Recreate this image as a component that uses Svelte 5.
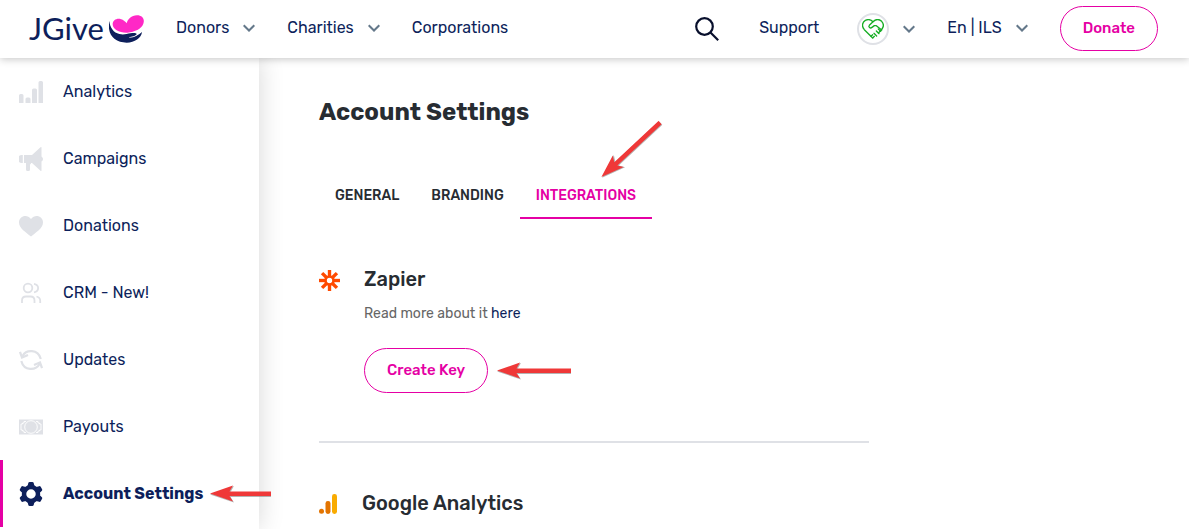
<script>
  const menu = [
    { label: 'Analytics', icon: 'bars' },
    { label: 'Campaigns', icon: 'megaphone' },
    { label: 'Donations', icon: 'heart' },
    { label: 'CRM - New!', icon: 'people' },
    { label: 'Updates', icon: 'refresh' },
    { label: 'Payouts', icon: 'cash' },
    { label: 'Account Settings', icon: 'gear', active: true }
  ];
  const tabs = ['General', 'Branding', 'Integrations'];
  let current = $state('Integrations');
  const spokes = [0, 45, 90, 135, 180, 225, 270, 315];
  const teeth = [0, 60, 120, 180, 240, 300];
</script>

{#snippet chevron()}
  <svg class="chevron" viewBox="0 0 12 8" aria-hidden="true"><path d="M.7 1.200 6 6.500 11.300 1.200" fill="none" stroke="#64788a" stroke-width="2" /></svg>
{/snippet}

{#snippet arrow(kind)}
  <svg class="arrow {kind}" viewBox="0 0 90 18" preserveAspectRatio="xMinYMid slice" aria-hidden="true">
    <path d="M0 9.500 24 1 20.500 7H90V12H20.500L24 17.500Z" fill="#777" opacity=".55" />
    <path d="M0 8.500 23 .500 19.500 6.500H90V11H19.500L23 16.500Z" fill="#ef3838" />
  </svg>
{/snippet}

<header>
  <a class="logo" href="#home" aria-label="JGive">
    <span>JGive</span>
    <svg viewBox="327 45 105 84" aria-hidden="true">
      <path d="M382 98C358 99 338 88 338 73C338 58 356 51 370 61C376 65 379 68 380 70C383 58 394 46 411 46C427 46 435 57 430 71C424 87 405 95 382 98Z" fill="#ff28c6" />
      <path d="M328 63C330 84 341 98 358 102C370 105 380 102 391 100C400 98 408 98 410 102C411 106 402 109 392 111C405 112 415 105 426 96C424 114 404 128 380 128C344 128 320 104 328 63Z" fill="#0d1f5b" />
      <path d="M388 112.500C399 112 408 108 415 100" fill="none" stroke="#fff" stroke-width="2" />
    </svg>
  </a>
  <nav class="main" aria-label="Main">
    <button>Donors {@render chevron()}</button>
    <button>Charities {@render chevron()}</button>
    <a href="#corporations">Corporations</a>
  </nav>
  <div class="tools">
    <button class="search" aria-label="Search">
      <svg viewBox="0 0 24 24" aria-hidden="true"><g fill="none" stroke="#080f2c" stroke-width="2.200"><circle cx="9.500" cy="9.500" r="8.300" /><path d="m15.500 15.500 7.700 7.700" /></g></svg>
    </button>
    <a class="link" href="#support">Support</a>
    <button class="profile" aria-label="Account menu">
      <span class="avatar">
        <svg viewBox="0 0 66 60" fill="none" stroke="#16ad24" stroke-width="4" stroke-linecap="round" stroke-linejoin="round" aria-hidden="true">
          <path d="M32 57 7 32C-2 22 1 9 10 4C19 0 27 2 33 8C42 0 52 0 59 7C67 16 64 26 58 33L50 41" />
          <path d="M33 8 22 19C18 24 25 30 30 25L37 20H43L59 33" />
          <path d="M33 56 37 52M36 43 44 51M43 36 51 44M49 30 56 37M27 52 32 47" />
        </svg>
      </span>
      {@render chevron()}
    </button>
    <button class="link">En | ILS {@render chevron()}</button>
    <a class="pill" href="#donate">Donate</a>
  </div>
</header>

<div class="body">
  <aside>
    <nav aria-label="Account">
      {#each menu as item}
        <a class="item" class:active={item.active} href="#{item.icon}">
          <svg class="glyph" viewBox="0 0 24 24" aria-hidden="true">
            {#if item.icon === 'bars'}
              <path d="M0 23V15.500q0-1.500 1.500-1.500h1.500q1.500 0 1.500 1.500V23ZM6.500 23V19q0-1.500 1.500-1.500h2q1.500 0 1.500 1.500V23ZM13 23V10q0-1.500 1.500-1.500h2Q18 8.500 18 10V23ZM19.500 23V2.500Q19.500 1 21 1h1.500Q24 1 24 2.500V23Z" />
            {:else if item.icon === 'megaphone'}
              <path d="M3.800 8H3a4 4 0 0 0 0 8h.8ZM5 8h8L21.500.300q1-.800 1 .500V9.500q1.500 1 1.500 2.500t-1.500 2.500v8.700q0 1.300-1 .500L13 16h-1v0.500q-1 .500-1 1.500v4.500q0 1.500-1.500 1.500H8.500Q7 24 7 22.500V16H5Z" />
            {:else if item.icon === 'heart'}
              <path d="M12 22.500C8 19 0 14.500 0 8.500C0 2 8-.500 12 5C16-.500 24 2 24 8.500C24 14.500 16 19 12 22.500Z" />
            {:else if item.icon === 'people'}
              <g fill="none" stroke="#dfe1e6" stroke-width="1.800"><circle cx="9" cy="7" r="4.300" /><path d="M3 22v-2.500q0-4 4-4h4.500q4 0 4 4V22M15 2.800c5.500 1 5.500 7.500 0 8.500M17.500 15.500q3.700 1 3.700 4V22" /></g>
            {:else if item.icon === 'refresh'}
              <g fill="none" stroke="#dfe1e6" stroke-width="2.200"><path d="M3.500 8C7 1.500 19 .500 21.800 11M20.500 16C17 22.500 5 23.500 2.300 13" /><path d="m1 4 2 5.500 6-2.500M23 20l-2-5.500-6 2.500" /></g>
            {:else if item.icon === 'cash'}
              <path d="M0 4.500H24V19.500H0Z" /><g fill="none" stroke="#fff" stroke-width=".9"><circle cx="12" cy="12" r="6.300" /><path d="M5 6.500V8H3.500V9H2v6h1.500v1H5v1.500h2M19 6.500V8h1.500V9H22v6h-1.500v1H19v1.500h-2M5 6.500h2M19 6.500h-2" /></g>
            {:else}
              <circle cx="12" cy="12" r="7" fill="none" stroke="#0d1f5b" stroke-width="4.500" />
              {#each teeth as angle}
                <path d="M8.300 5 9.300 1Q9.600 0 10.600 0h2.800q1 0 1.300 1l1 4Z" fill="#0d1f5b" transform="rotate({angle} 12 12)" />
              {/each}
            {/if}
          </svg>
          <span>{item.label}</span>
          {#if item.active}{@render arrow('menu-arrow')}{/if}
        </a>
      {/each}
    </nav>
  </aside>

  <main>
    <h1>Account Settings</h1>
    <div class="tabs" role="tablist">
      {#each tabs as tab}
        <button role="tab" aria-selected={current === tab} class:selected={current === tab} onclick={() => (current = tab)}>{tab}</button>
      {/each}
      {@render arrow('tab-arrow')}
    </div>

    <section>
      <div class="mark">
        <svg class="zapier" viewBox="0 0 20 20" aria-hidden="true">
          {#each spokes as angle}
            <path d="M10 0V7" stroke="#ff4a00" stroke-width="3.200" transform="rotate({angle} 10 10)" />
          {/each}
          <circle cx="10" cy="10" r="3.800" fill="none" stroke="#ff4a00" stroke-width="2.400" />
        </svg>
      </div>
      <div>
        <h2>Zapier</h2>
        <p>Read more about it <a href="#zapier">here</a></p>
        <div class="action">
          <button class="pill">Create Key</button>
          {@render arrow('key-arrow')}
        </div>
      </div>
    </section>
    <section>
      <div class="mark">
        <svg class="ga" viewBox="0 0 18 20" preserveAspectRatio="xMinYMid" aria-hidden="true"><circle cx="2.500" cy="17.300" r="2.500" fill="#e37400" /><rect x="6.500" y="7" width="5" height="13" rx="2.400" fill="#e37400" /><rect x="13" width="5" height="20" rx="2.400" fill="#f9ab00" /></svg>
      </div>
      <h2>Google Analytics</h2>
    </section>
  </main>
</div>

<style>
  :global(body) { font-family: Rubik, Roboto, sans-serif; font-size: 16px; line-height: 20px; color: #0d1f5b; background: #fff; }
  :global(*) { box-sizing: border-box; }
  a { color: inherit; text-decoration: none; }
  button { font: inherit; color: inherit; background: none; border: 0; padding: 0; cursor: pointer; }
  svg { display: block; flex: none; }
  header { position: relative; z-index: 2; display: flex; align-items: center; height: 58px; padding: 0 31px 1px 29px; background: #fff; box-shadow: 0 1px 8px rgba(0, 0, 0, .24); }
  .logo { display: flex; align-items: center; gap: 4px; width: 115px; font: 31px/36px Lato, sans-serif; }
  .logo span { flex: 1; padding-bottom: 2px; }
  .logo svg { width: 35px; height: 28px; }
  .main, .tools { display: flex; align-items: center; gap: 32px; white-space: nowrap; }
  .main { margin-left: 32px; padding-bottom: 2px; }
  .main button, .tools button { display: flex; align-items: center; gap: 14px; }
  .tools { margin-left: auto; }
  .tools .link { padding-bottom: 2px; }
  .tools .search { margin-right: 8px; }
  .tools .search + a { margin-right: 6px; }
  .search svg { width: 24px; height: 24px; }
  .chevron { width: 12px; height: 8px; }
  .avatar { display: grid; place-items: center; width: 32px; height: 32px; border: 2px solid #dfe1e6; border-radius: 50%; }
  .avatar svg { width: 22px; height: 20px; }
  .pill { display: flex; align-items: center; justify-content: center; height: 45px; padding: 0 22px 2px; border: 1px solid #e500a4; border-radius: 23px; color: #e500a4; font-size: 15px; font-weight: 500; }
  .body { display: flex; min-height: calc(100vh - 58px); }
  aside { flex: none; width: 259px; box-shadow: 0 0 24px rgba(0, 0, 0, .16); }
  .item { position: relative; display: flex; align-items: center; gap: 20px; height: 67px; padding-left: 19px; }
  .item.active { padding-left: 16px; border-left: 3px solid #e500a4; font-weight: 700; }
  .glyph { width: 24px; height: 24px; fill: #dfe1e6; }
  main { flex: 1; padding: 38px 60px 0; color: #272c32; }
  h1 { margin: 0; font-size: 24px; line-height: 32px; font-weight: 700; }
  .tabs { position: relative; display: flex; width: fit-content; margin-top: 44px; }
  .tabs button { height: 47px; padding: 2px 16px 0; border-bottom: 2px solid transparent; font-size: 14px; font-weight: 500; text-transform: uppercase; }
  .tabs button.selected { color: #e500a4; border-color: #e500a4; }
  section { display: flex; gap: 24px; max-width: 550px; padding: 45px 0 48px; border-bottom: 2px solid #dfe1e6; }
  section + section { padding-bottom: 0; border: 0; }
  .mark { display: flex; align-items: center; height: 32px; }
  .zapier { width: 21px; height: 21px; }
  .ga { width: 19px; height: 20px; }
  h2 { margin: 0; font-size: 20px; line-height: 30px; font-weight: 500; }
  p { margin: 9px 0 23px; font-size: 14px; line-height: 22px; color: #666; }
  p a { color: #0d1f5b; }
  .action { position: relative; width: fit-content; }
  .arrow { position: absolute; width: 74px; height: 18px; pointer-events: none; }
  .key-arrow { left: calc(100% + 9px); top: 14px; }
  .menu-arrow { left: 207px; top: 25px; width: 61px; }
  .tab-arrow { right: -19px; top: -31px; width: 80px; transform: rotate(-43deg); }
</style>
